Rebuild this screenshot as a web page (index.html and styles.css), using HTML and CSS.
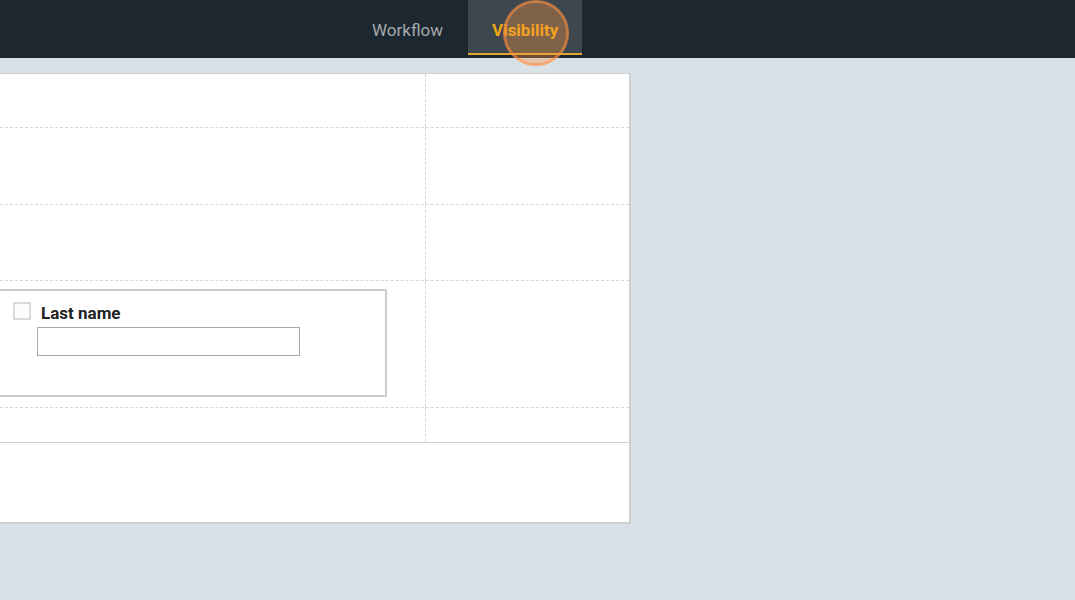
FILE: index.html
```html
<!DOCTYPE html>
<html lang="en">
<head>
  <meta charset="utf-8">
  <meta name="viewport" content="width=device-width, initial-scale=1">
  <title>Visibility</title>
  <link rel="stylesheet" href="styles.css">
</head>
<body>
  <header class="topbar">
    <nav class="tabs">
      <a class="tab" href="#workflow">Workflow</a>
      <a class="tab tab-active" href="#visibility" aria-current="page">Visibility<span class="click-marker"></span></a>
    </nav>
  </header>
  <main class="workspace">
    <form class="panel">
      <div class="row row-small"><div class="cell"></div><div class="cell"></div></div>
      <div class="row row-medium"><div class="cell"></div><div class="cell"></div></div>
      <div class="row row-regular"><div class="cell"></div><div class="cell"></div></div>
      <div class="row">
        <div class="cell cell-field">
          <div class="field">
            <input class="field-check" type="checkbox" aria-label="Select Last name">
            <div class="field-body">
              <label class="field-label" for="last-name">Last name</label>
              <input class="field-input" id="last-name" type="text">
            </div>
          </div>
        </div>
        <div class="cell"></div>
      </div>
      <div class="row row-last"><div class="cell"></div><div class="cell"></div></div>
      <div class="panel-footer"></div>
    </form>
  </main>
</body>
</html>
```

FILE: styles.css
```css
* {
  box-sizing: border-box;
}

body {
  margin: 0;
  min-height: 100vh;
  background: #d9e0e7;
  color: #222;
  font-family: Roboto, "Liberation Sans", sans-serif;
  font-size: 17px;
}

.topbar {
  height: 58px;
  padding-left: 348px;
  background: #1d272f;
}

.tabs {
  display: flex;
  gap: 1px;
}

.tab {
  position: relative;
  height: 55px;
  padding: 6px 24px 0;
  border-bottom: 2px solid transparent;
  color: #a4a9ad;
  line-height: 48px;
  text-decoration: none;
}

.tab-active {
  background: #3e474e;
  border-bottom-color: #e2a62c;
  color: #eda912;
  font-weight: 700;
}

.click-marker {
  position: absolute;
  top: 0;
  left: 35px;
  width: 66px;
  height: 66px;
  border: 3px solid rgba(255, 143, 63, 0.7);
  border-radius: 50%;
  background: rgba(253, 148, 64, 0.35);
  background-clip: padding-box;
}

.workspace {
  display: grid;
  grid-template-columns: 631fr 444fr;
  padding: 15px 0;
}

.panel {
  border: solid #cdd1d4;
  border-width: 1px 2px 2px 0;
  background: #fff;
}

.row {
  display: grid;
  grid-template-columns: 1fr 204px;
  border-bottom: 1px dashed #d8d8d8;
}

.row-small {
  height: 54px;
}

.row-medium {
  height: 77px;
}

.row-regular {
  height: 76px;
}

.row-last {
  height: 35px;
  border-bottom: 1px solid #cfcfcf;
}

.cell + .cell {
  border-left: 1px dashed #d8d8d8;
}

.cell-field {
  padding: 8px 38px 10px 0;
}

.field {
  display: flex;
  gap: 6px;
  min-height: 108px;
  padding: 11px 85px 0 13px;
  border: 2px solid #cdcdcd;
  border-left: 0;
  border-radius: 0 2px 2px 0;
}

.field-check {
  appearance: none;
  flex: none;
  width: 18px;
  height: 18px;
  margin: 0;
  border: 2px solid #dadada;
  background: #fdfcfc;
}

.field-body {
  display: flex;
  flex: 1;
  flex-direction: column;
  gap: 2px;
}

.field-label {
  padding-left: 4px;
  font-weight: 700;
  line-height: 23px;
}

.field-input {
  width: 100%;
  height: 29px;
  padding: 0 8px;
  border: 1px solid #a8a8a8;
  background: #fff;
  font: inherit;
}

.panel-footer {
  height: 79px;
}
```
